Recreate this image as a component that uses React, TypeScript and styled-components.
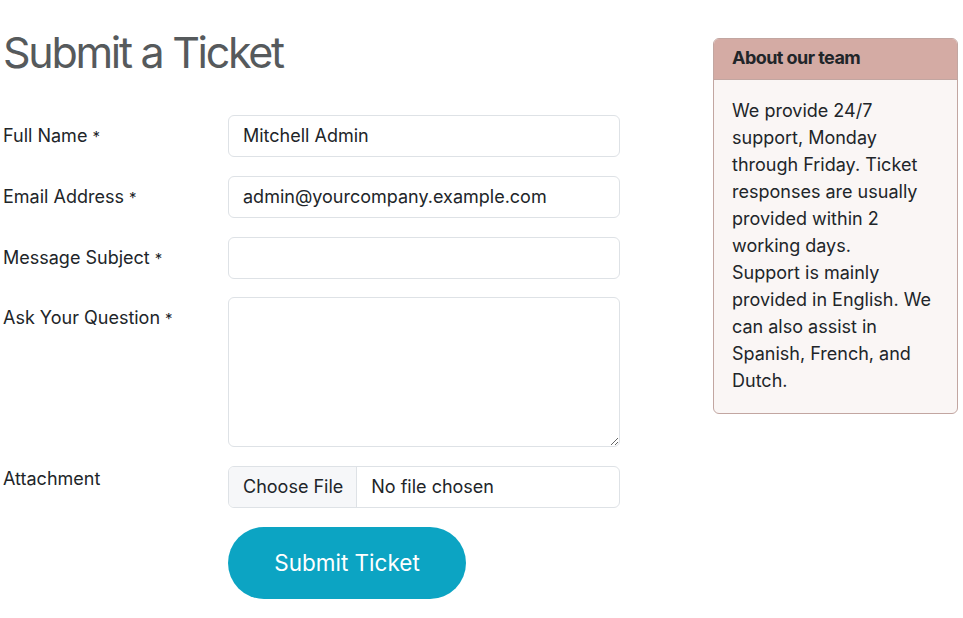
import styled, { createGlobalStyle } from "styled-components";

const GlobalStyle = createGlobalStyle`
  body {
    margin: 0;
    background: #fff;
    font-family: Inter, "Noto Sans", sans-serif;
    color: #212529;
  }
`;

const Page = styled.div`
  display: flex;
  align-items: flex-start;
  padding: 0 5px 0 3px;
`;

const Main = styled.div`
  width: 617px;
`;

const Title = styled.h1`
  margin: 26px 0 0;
  font-size: 43px;
  font-weight: 400;
  letter-spacing: -2.3px;
  color: #565a5c;
  line-height: 52px;
`;

const Form = styled.form`
  display: flex;
  flex-direction: column;
  gap: 18.75px;
  margin-top: 37px;
`;

const Row = styled.div`
  display: grid;
  grid-template-columns: 225px 392px;
  align-items: start;
`;

const Label = styled.label<{ $offset?: number }>`
  font-size: 18px;
  padding-top: ${(p) => (p.$offset ?? 9) + "px"};
  line-height: 24px;
`;

const Star = styled.span`
  font-size: 15px;
  margin-left: 5px;
`;

const Input = styled.input`
  box-sizing: border-box;
  width: 100%;
  height: 42px;
  border: 1px solid #dee2e6;
  border-radius: 6px;
  padding: 0 14px 1px;
  font-family: inherit;
  font-size: 18px;
  color: #212529;
  outline: none;
`;

const TextArea = styled.textarea`
  box-sizing: border-box;
  width: 100%;
  height: 150px;
  border: 1px solid #dee2e6;
  border-radius: 6px;
  padding: 8px 14px;
  font-family: inherit;
  font-size: 18px;
  outline: none;
  resize: vertical;
`;

const FileBox = styled.div`
  box-sizing: border-box;
  display: flex;
  height: 42px;
  border: 1px solid #dee2e6;
  border-radius: 6px;
  overflow: hidden;
  font-size: 18px;
`;

const FileButton = styled.span`
  display: flex;
  align-items: center;
  padding: 0 13px 1px 14px;
  background: #f6f7f9;
  border-right: 1px solid #dee2e6;
`;

const FileName = styled.span`
  display: flex;
  align-items: center;
  padding: 0 0 1px 14px;
`;

const Submit = styled.button`
  grid-column: 2;
  width: 238px;
  height: 72px;
  border: none;
  border-radius: 36px;
  background: #0ca4c3;
  color: #fff;
  font-family: inherit;
  font-size: 22.5px;
  padding-bottom: 2px;
`;

const Card = styled.aside`
  margin-left: auto;
  margin-top: 38px;
  width: 245px;
  box-sizing: border-box;
  border: 1px solid #c2a6a1;
  border-radius: 6px;
  overflow: hidden;
  background: #faf6f5;
`;

const CardHeader = styled.div`
  background: #d4aba4;
  border-bottom: 1px solid #c2a6a1;
  padding: 0 18px 3px;
  height: 41px;
  box-sizing: border-box;
  display: flex;
  align-items: center;
  font-weight: 700;
  font-size: 18px;
  letter-spacing: -0.55px;
`;

const CardBody = styled.div`
  padding: 17px 18px 19px;
  font-size: 18px;
  line-height: 27px;
`;

export default function App() {
  return (
    <>
      <GlobalStyle />
      <Page>
        <Main>
          <Title>Submit a Ticket</Title>
          <Form onSubmit={(e) => e.preventDefault()}>
            <Row>
              <Label>
                Full Name<Star>*</Star>
              </Label>
              <Input defaultValue="Mitchell Admin" />
            </Row>
            <Row>
              <Label>
                Email Address<Star>*</Star>
              </Label>
              <Input defaultValue="admin@yourcompany.example.com" />
            </Row>
            <Row>
              <Label>
                Message Subject<Star>*</Star>
              </Label>
              <Input />
            </Row>
            <Row>
              <Label>
                Ask Your Question<Star>*</Star>
              </Label>
              <TextArea />
            </Row>
            <Row>
              <Label $offset={1}>Attachment</Label>
              <FileBox>
                <FileButton>Choose File</FileButton>
                <FileName>No file chosen</FileName>
              </FileBox>
            </Row>
            <Row>
              <Submit type="submit">Submit Ticket</Submit>
            </Row>
          </Form>
        </Main>
        <Card>
          <CardHeader>About our team</CardHeader>
          <CardBody>
            We provide 24/7 support, Monday through Friday. Ticket responses
            are usually provided within 2 working days.
            <br />
            Support is mainly provided in English. We can also assist in
            Spanish, French, and Dutch.
          </CardBody>
        </Card>
      </Page>
    </>
  );
}
